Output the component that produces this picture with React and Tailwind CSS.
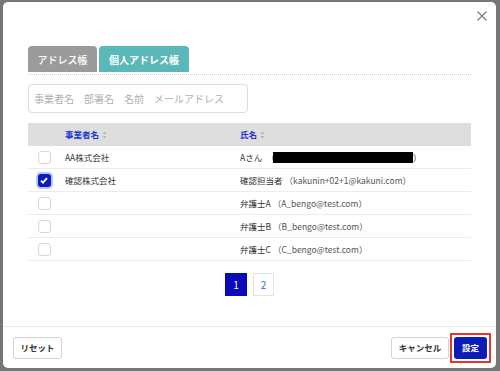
import React from "react";

const rows = [
  { checked: false, company: "AA株式会社", name: "Aさん", redacted: true },
  { checked: true, company: "確認株式会社", name: "確認担当者", email: "kakunin+02+1@kakuni.com" },
  { checked: false, company: "", name: "弁護士A", email: "A_bengo@test.com" },
  { checked: false, company: "", name: "弁護士B", email: "B_bengo@test.com" },
  { checked: false, company: "", name: "弁護士C", email: "C_bengo@test.com" },
];

const SortIcon = () => (
  <svg width="5" height="8" viewBox="0 0 5 8" className="ml-[3px]">
    <path d="M2.5 0.5 L4.5 3 L0.5 3 Z" fill="#b5b5b5" />
    <path d="M2.5 7.5 L4.5 5 L0.5 5 Z" fill="#b5b5b5" />
  </svg>
);

const Checkbox = ({ checked }) =>
  checked ? (
    <div className="w-[13px] h-[13px] rounded-[3px] bg-[#0d1cb8] flex items-center justify-center ring-2 ring-[#b3c6ff]">
      <svg width="8" height="7" viewBox="0 0 8 7">
        <path d="M1 3.6 L3 5.6 L7 1.2" stroke="#fff" strokeWidth="1.8" fill="none" />
      </svg>
    </div>
  ) : (
    <div className="w-[13px] h-[13px] rounded-[3px] border border-[#d6d6d6] bg-white" />
  );

export default function App() {
  return (
    <div
      className="w-[500px] h-[371px] bg-[#767676] pl-[3px] pt-[2px] overflow-hidden"
      style={{ fontFamily: '"Noto Sans CJK JP", "Noto Sans", sans-serif' }}
    >
      <div className="w-[493px] h-[366px] bg-white rounded-[5px] flex flex-col">
        {/* header */}
        <div className="h-[44px] flex justify-end">
          <svg width="10" height="10" viewBox="0 0 10 10" className="mt-[9px] mr-[9px]">
            <path d="M0.5 0.5 L9.5 9.5 M9.5 0.5 L0.5 9.5" stroke="#777" strokeWidth="1.1" />
          </svg>
        </div>

        {/* body */}
        <div className="flex-1 px-[25px]">
          <div className="flex items-end gap-[2px] pb-[2px] border-b border-dotted border-[#cfcfcf]">
            <div className="w-[69px] h-[26px] bg-[#9b9b9b] rounded-t-[4px] flex items-center justify-center text-white text-[10px] font-medium">
              アドレス帳
            </div>
            <div className="w-[90px] h-[26px] bg-[#5bb8b9] rounded-t-[4px] flex items-center justify-center text-white text-[10px] font-bold">
              個人アドレス帳
            </div>
          </div>

          <div className="mt-[9px] w-[220px] h-[29px] border border-[#dddddd] rounded-[4px] flex items-center px-[5px] text-[10px] text-[#b0b0b0]">
            事業者名　部署名　名前　メールアドレス
          </div>

          <div className="mt-[10px] text-[8.5px] text-[#333]">
            <div className="grid grid-cols-[32px_173px_1fr] h-[23px] bg-[#dedede] items-center font-bold text-[#2236d4]">
              <div />
              <div className="flex items-center pl-[5px]">
                事業者名
                <SortIcon />
              </div>
              <div className="flex items-center pl-[7px]">
                氏名
                <SortIcon />
              </div>
            </div>
            {rows.map((r, i) => (
              <div
                key={i}
                className="grid grid-cols-[32px_173px_1fr] h-[23px] items-center border-b border-[#ececec]"
              >
                <div className="flex justify-center">
                  <Checkbox checked={r.checked} />
                </div>
                <div className="pl-[5px]">{r.company}</div>
                <div className="pl-[7px] flex items-center">
                  {r.redacted ? (
                    <>
                      <span>{r.name}　（</span>
                      <span className="inline-block w-[140px] h-[11px] bg-black -ml-[2px]" />
                      <span>）</span>
                    </>
                  ) : (
                    <>
                      <span>{r.name}</span>
                      <span className="text-[#555] ml-[2px]">（{r.email}）</span>
                    </>
                  )}
                </div>
              </div>
            ))}
          </div>

          <div className="mt-[12px] flex justify-center gap-[6px] text-[10px]">
            <div className="w-[22px] h-[23px] bg-[#0a0ab8] text-white flex items-center justify-center">1</div>
            <div className="w-[21px] h-[23px] border border-[#e2e2e2] text-[#3a66e8] flex items-center justify-center">2</div>
          </div>
        </div>

        {/* footer */}
        <div className="h-[42px] border-t border-[#ebebeb] flex items-center justify-between pl-[10px] pr-[5px] text-[8.5px] font-bold">
          <button className="w-[49px] h-[22px] border border-[#d4d4d4] rounded-[3px] text-[#333] bg-white">
            リセット
          </button>
          <div className="flex items-center gap-[1px]">
            <button className="w-[58px] h-[22px] border border-[#d4d4d4] rounded-[3px] text-[#333] bg-white">
              キャンセル
            </button>
            <div className="border-2 border-[#e8342c] p-[2px]">
              <button className="w-[33px] h-[22px] rounded-[3px] bg-[#0c1db6] text-white flex items-center justify-center">
                設定
              </button>
            </div>
          </div>
        </div>
      </div>
    </div>
  );
}
